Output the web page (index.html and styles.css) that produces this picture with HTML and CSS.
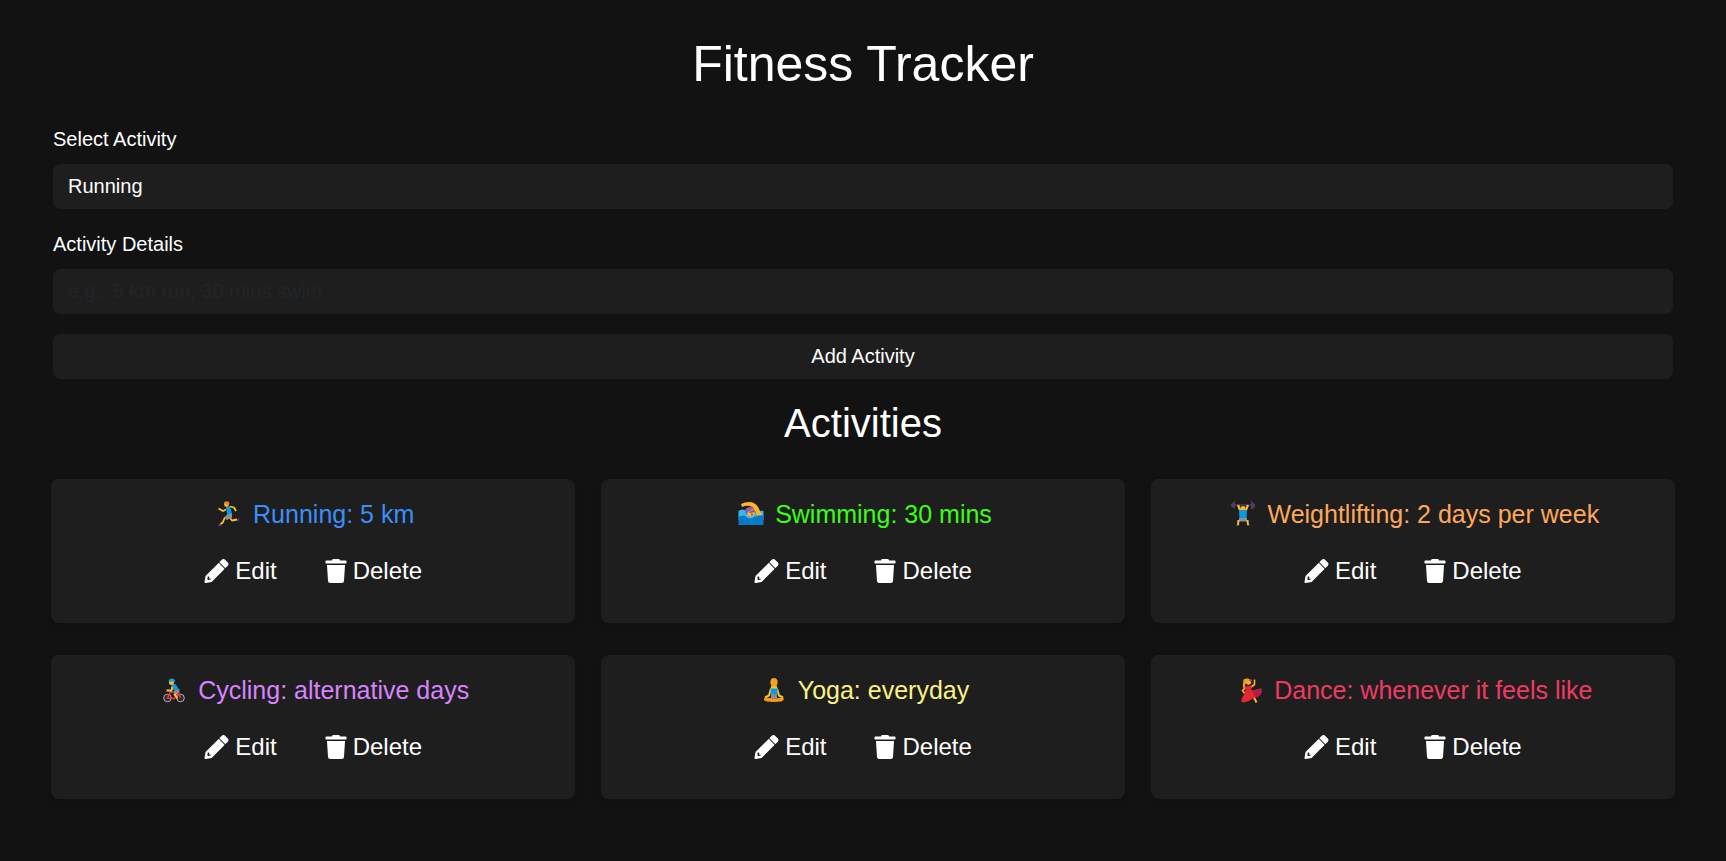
FILE: index.html
```html
<!DOCTYPE html>
<html lang="en">
<head>
<meta charset="utf-8">
<title>Fitness Tracker</title>
<link rel="stylesheet" href="styles.css">
</head>
<body>
<svg class="sprite" aria-hidden="true">
  <symbol id="pencil" viewBox="0 0 512 512"><path d="M498 142l-46 46c-5 5-13 5-17 0L324 77c-5-5-5-12 0-17l46-46c19-19 49-19 68 0l60 60c19 19 19 49 0 68zm-202-52L22 362 0 484c-3 16 12 30 28 28l122-22 272-272c5-5 5-13 0-17L313 90c-4-5-12-5-17 0zM100 420h44l-24 22-46 8-12-12 8-68 30 10v40z"/></symbol>
  <symbol id="trash" viewBox="0 0 448 512"><path d="M432 32H312l-9.400-18.700A24 24 0 0 0 281.100 0H166.800a23.720 23.720 0 0 0-21.400 13.300L136 32H16A16 16 0 0 0 0 48v32a16 16 0 0 0 16 16h416a16 16 0 0 0 16-16V48a16 16 0 0 0-16-16zM32 128l21.200 339a48 48 0 0 0 47.900 45h245.800a48 48 0 0 0 47.900-45L416 128z"/></symbol>
</svg>
<main class="page">
  <h1 class="title">Fitness Tracker</h1>
  <form class="form">
    <label class="label" for="activity">Select Activity</label>
    <select class="field select" id="activity"><option>Running</option></select>
    <label class="label" for="details">Activity Details</label>
    <input class="field" id="details" placeholder="e.g., 5 km run, 30 mins swim">
    <button class="field submit" type="button">Add Activity</button>
  </form>
  <h2 class="subtitle">Activities</h2>
  <section class="cards">
    <article class="card">
      <h3 class="name running">
        <svg class="emoji" viewBox="0 -1 30 30"><g fill="none" stroke="#ffc12f" stroke-width="1.800" stroke-linejoin="round"><path d="M12 9.500 9 11 4.500 8.500"/><path d="m16 6.500 4 1 2 3.500"/><path d="m11 17-2 5-3 3"/><path d="m16 18 2 2.500 5-1"/></g><path d="m12 7 4-1 2 8-4.500 2z" fill="#079be5"/><path d="m13 14.500 5-1v4l-5 2.500-3-2z" fill="#918e91"/><circle cx="12.500" cy="4.500" r="2.400" fill="#ffb52e"/><path d="M10 3.500c0-3 5-3 5.500 0l-1 1.500z" fill="#e88b14"/><path d="m4 25 4-1v1.500l-3 1zM23 19l2-1v3h-1.500z" fill="#5a3675"/></svg>
        <span>Running: 5 km</span></h3>
      <div class="actions"><button class="action"><svg class="pen"><use href="#pencil"/></svg>Edit</button><button class="action"><svg class="bin"><use href="#trash"/></svg>Delete</button></div>
    </article>
    <article class="card">
      <h3 class="name swimming">
        <svg class="emoji" viewBox="0 -1 30 30"><path d="M2.500 11q4-3 8 0l8 2q4-3 9-2v9h-25z" fill="#35b8f1"/><path d="M5 4c6-3 14-3 17 3l4 8-4 2-4-8c-3-4-7-4-12-2z" fill="#ffb22d"/><circle cx="14.500" cy="12" r="4.500" fill="#ffb52e"/><path d="M9 12c0-5 5-6 9-3l-6 3-1 3z" fill="#8b63b5"/><path d="m13 12 5-2 1 2-5 1z" fill="#765097"/><circle cx="16" cy="14.500" r="1" fill="#c83b38"/><path d="M2.500 17q5-3 8 0t8 0 9-1v9h-25z" fill="#087ac5"/></svg>
        <span>Swimming: 30 mins</span></h3>
      <div class="actions"><button class="action"><svg class="pen"><use href="#pencil"/></svg>Edit</button><button class="action"><svg class="bin"><use href="#trash"/></svg>Delete</button></div>
    </article>
    <article class="card">
      <h3 class="name lifting">
        <svg class="emoji" viewBox="0 -1 30 30"><path d="M5 5h20" stroke="#453c4c" stroke-width="1.500"/><path d="M4 5 6 3v4l-2-1zm20-2 2 2v2l-2 1z" fill="#523b65" stroke="#523b65" stroke-width="2"/><path d="M10 5l2 5h6l2-5" fill="none" stroke="#ffb72e" stroke-width="2.200"/><circle cx="15" cy="8.500" r="2.500" fill="#ffb52e"/><path d="M11 10h8l-.500 9h-7z" fill="#079be5"/><path d="M11 18h8v3.500h-8z" fill="#918e91"/><path d="m10.500 20-.500 5m9.500-5 .500 5" stroke="#ffbd2e" stroke-width="2"/><path d="M8 25.500h3M19 25.500h3" stroke="#5a3675" stroke-width="1.200"/></svg>
        <span>Weightlifting: 2 days per week</span></h3>
      <div class="actions"><button class="action"><svg class="pen"><use href="#pencil"/></svg>Edit</button><button class="action"><svg class="bin"><use href="#trash"/></svg>Delete</button></div>
    </article>
    <article class="card">
      <h3 class="name cycling">
        <svg class="emoji" viewBox="-.5 -1.500 30 30"><g fill="#302b31" stroke="#b8a7bc" stroke-width="1"><circle cx="8" cy="21.500" r="3.800"/><circle cx="21" cy="21.500" r="3.800"/></g><path d="m8 21.500 3-6h8l-4 6.500zm11-6 2 6" fill="none" stroke="#e83a3d" stroke-width="1.500"/><path d="m12 8 4-.500 4 6-3 2-5-4z" fill="#079be5"/><path d="m13 10-1 4H7m10 2-2 2 3 4" fill="none" stroke="#ffc12f" stroke-width="1.800"/><path d="m15 14 5-1-.500 3-5 1z" fill="#918e91"/><circle cx="12" cy="6" r="2.500" fill="#ffb52e"/><path d="M9 5c0-4 6.500-4 7 0z" fill="#159edd"/></svg>
        <span>Cycling: alternative days</span></h3>
      <div class="actions"><button class="action"><svg class="pen"><use href="#pencil"/></svg>Edit</button><button class="action"><svg class="bin"><use href="#trash"/></svg>Delete</button></div>
    </article>
    <article class="card">
      <h3 class="name yoga">
        <svg class="emoji" viewBox="0 -1.500 30 30"><path d="m12 12-2 7-4 2m12-9 2 7 4 2" fill="none" stroke="#ffc12f" stroke-width="2"/><path d="M11.500 11h7l-.500 8h-6z" fill="#079be5"/><path d="M12 18h6v4h-6z" fill="#918e91"/><path d="m6 21 9 1 9-1c2 1 0 4-2 4l-7 .500-7-.500c-3 0-4-3-2-4z" fill="#f39a16"/><path d="M12.500 9h5l1 3h-7z" fill="#ffc12f"/><ellipse cx="15" cy="5.800" rx="3.600" ry="4.400" fill="#f4a321"/></svg>
        <span>Yoga: everyday</span></h3>
      <div class="actions"><button class="action"><svg class="pen"><use href="#pencil"/></svg>Edit</button><button class="action"><svg class="bin"><use href="#trash"/></svg>Delete</button></div>
    </article>
    <article class="card">
      <h3 class="name dance">
        <svg class="emoji" viewBox="-1.500 -1.500 30 30"><path d="m9 11-3 3 3 4m5-7 4-3V3" fill="none" stroke="#ffb52e" stroke-width="1.600"/><path d="m17 20 3 6" stroke="#ffb52e" stroke-width="2"/><path d="m8 10 7-1 0 5c4 0 6-2 10-2 1 5-2 8-6 9-4 1-7 5-13 5-2-1-1-4 1-7l2-5z" fill="#e32830"/><path d="m16 15 9-3c1 5-2 8-6 9z" fill="#b51d49"/><circle cx="12" cy="5.500" r="2.700" fill="#ffb52e"/><path d="M7 3c4-2 7-1 6 1l-4 3-1 5c-3-1-1-5-1-9z" fill="#f0a11c"/><circle cx="14" cy="4" r="1.300" fill="#df2c68"/></svg>
        <span>Dance: whenever it feels like</span></h3>
      <div class="actions"><button class="action"><svg class="pen"><use href="#pencil"/></svg>Edit</button><button class="action"><svg class="bin"><use href="#trash"/></svg>Delete</button></div>
    </article>
  </section>
</main>
</body>
</html>
```
FILE: styles.css
```css
* { box-sizing: border-box; }
body {
  margin: 0;
  min-height: 861px;
  background: #121212;
  color: #fff;
  font: 20px/30px "Liberation Sans", Arial, sans-serif;
}
.sprite { display: none; }
.page { padding: 34px 51px 0; }
.title, .subtitle, .name { margin: 0; font-weight: 400; text-align: center; }
.title { font-size: 50px; line-height: 60px; }
.form { display: flex; flex-direction: column; margin: 30px 2px 0; }
.label { height: 30px; margin-bottom: 10px; }
.field {
  appearance: none;
  width: 100%;
  height: 45px;
  margin: 0 0 20px;
  padding: 0 15px;
  border: 0;
  border-radius: 7.5px;
  background: #1e1e1e;
  color: #fff;
  font: inherit;
}
.field::placeholder { color: #212529; opacity: 1; }
.select { padding-bottom: 2px; }
.submit { margin: 0; padding-bottom: 2px; text-align: center; }
.subtitle { margin-top: 20px; font-size: 40px; line-height: 48px; }
.cards {
  display: grid;
  grid-template-columns: repeat(3, 1fr);
  gap: 32px 25.5px;
  margin-top: 32px;
}
.card {
  height: 144px;
  padding: 20px;
  border-radius: 7.5px;
  background: #1e1e1e;
  box-shadow: 0 5px 10px rgba(0, 0, 0, .1);
}
.name {
  display: flex;
  justify-content: center;
  gap: 9px;
  padding-left: 2px;
  font-size: 25px;
  line-height: 30px;
  white-space: pre;
}
.emoji { width: 30px; height: 30px; }
.running { color: #3b8ffc; }
.swimming { color: #39ff14; }
.lifting { color: #ffa85c; }
.cycling { color: #d883ff; }
.yoga { color: #f9f285; }
.dance { color: #f03a65; }
.actions { display: flex; justify-content: center; gap: 48px; margin-top: 23px; }
.action {
  display: flex;
  align-items: center;
  gap: 6px;
  height: 38px;
  padding: 0;
  border: 0;
  background: none;
  color: #fff;
  font: 24px/38px "Liberation Sans", Arial, sans-serif;
}
.pen { width: 25px; height: 24px; fill: currentColor; }
.bin { width: 22px; height: 24px; fill: currentColor; }
```
